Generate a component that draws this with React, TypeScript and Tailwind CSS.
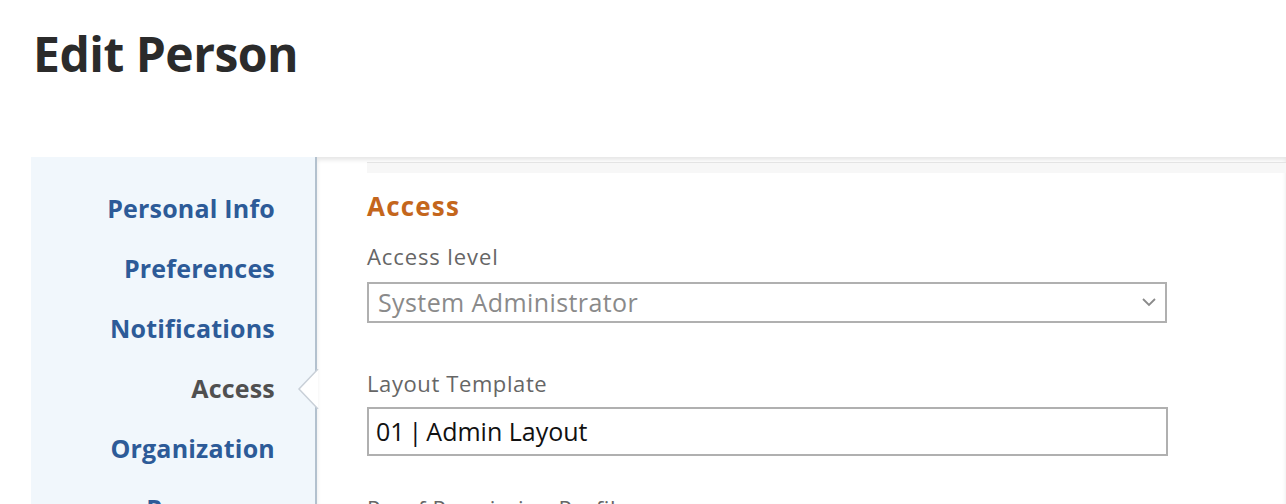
import React from "react";

const navItems = [
  { label: "Personal Info", active: false },
  { label: "Preferences", active: false },
  { label: "Notifications", active: false },
  { label: "Access", active: true },
  { label: "Organization", active: false },
  { label: "Resources", active: false },
];

export default function App() {
  return (
    <div className="w-full h-[504px] overflow-hidden bg-white" style={{ fontFamily: "'Open Sans', sans-serif" }}>
      <h1 className="pl-[33px] pt-[24px] h-[157px] text-[48px] leading-[60px] font-bold tracking-[-0.5px] text-[#2b2b2b]">
        Edit Person
      </h1>

      <div className="flex ml-[31px] h-[347px]">
        {/* Side nav */}
        <nav className="w-[286px] shrink-0 bg-[#f1f7fc] border-r-2 border-[#b3c1ce] flex flex-col items-end pr-[40px] pt-[36px] gap-[30px]">
          {navItems.map((item) => (
            <a
              key={item.label}
              className={`text-[25px] leading-[30px] font-bold tracking-[0.2px] ${item.active ? "text-[#505050]" : "text-[#2d5b98]"}`}
            >
              {item.label}
            </a>
          ))}
        </nav>

        {/* Content */}
        <div className="relative flex-1 shadow-[inset_0_3px_4px_rgba(0,0,0,0.10)]">
          {/* notch pointing at active nav item */}
          <svg className="absolute left-[-20px] top-[212px]" width="22" height="40" viewBox="0 0 22 40">
            <polygon points="21,0 2,20 21,40" fill="#ffffff" />
            <polyline points="21,0 2,20 21,40" fill="none" stroke="#c9d0d8" strokeWidth="1.5" />
          </svg>

          <div className="ml-[50px] mt-[5px] h-[11px] bg-[#f7f7f7] border-t border-[#e4e4e4]" />

          <div className="pl-[50px] pt-[18px]">
            <h2 className="text-[26px] leading-[30px] font-bold tracking-[1.2px] text-[#c4661c]">Access</h2>

            <label className="block mt-[22px] text-[22px] leading-[26px] tracking-[0.9px] text-[#666666]">Access level</label>
            <div className="mt-[13px] w-[800px] h-[41px] border-2 border-[#b0b0b0] flex items-center justify-between pl-[9px] pr-[9px]">
              <span className="text-[25px] tracking-[0.4px] text-[#8a8a8a]">System Administrator</span>
              <svg width="14" height="9" viewBox="0 0 14 9">
                <polyline points="1,1 7,7 13,1" fill="none" stroke="#8a8a8a" strokeWidth="1.8" />
              </svg>
            </div>

            <label className="block mt-[47px] text-[22px] leading-[26px] tracking-[0.6px] text-[#666666]">Layout Template</label>
            <div className="mt-[11px] w-[801px] h-[49px] border-2 border-[#b0b0b0] flex items-center pl-[7px]">
              <span className="text-[25px] text-[#111111]">
                01<span className="mx-[4px]">|</span>Admin Layout
              </span>
            </div>

            <label className="block mt-[39px] text-[22px] leading-[26px] tracking-[0.6px] text-[#666666]">Proof Permission Profile</label>
          </div>
        </div>
      </div>
    </div>
  );
}
